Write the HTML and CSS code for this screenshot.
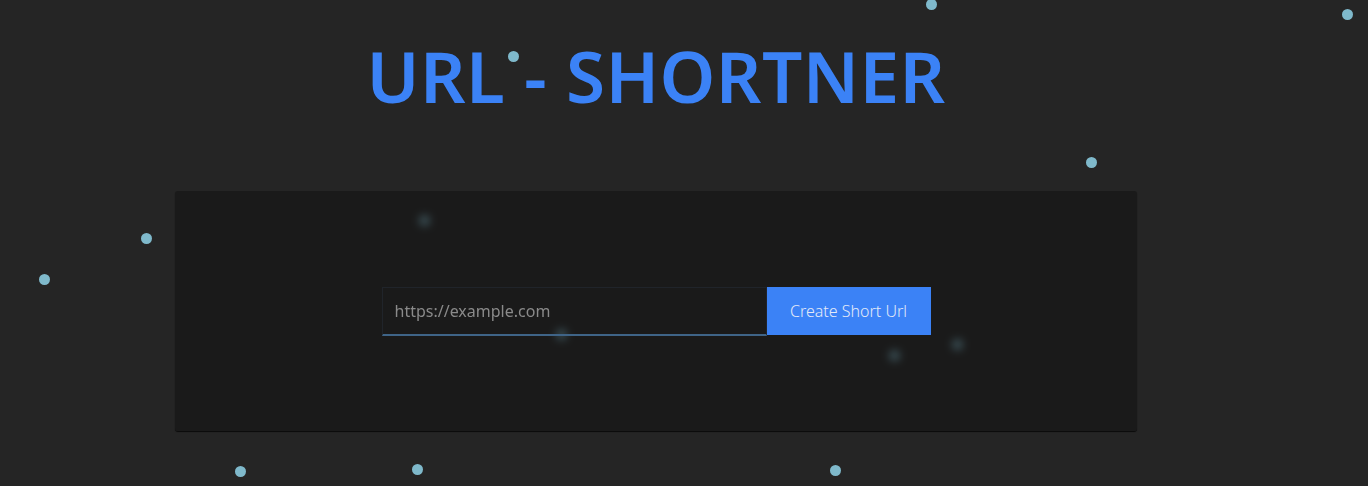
FILE: index.html
```html
<!DOCTYPE html>
<html lang="en">
<head>
<meta charset="utf-8">
<title>URL - SHORTNER</title>
<link rel="stylesheet" href="styles.css">
</head>
<body>
<div class="particles">
  <span class="dot" style="left:931px;top:4px"></span>
  <span class="dot" style="left:1347px;top:14px"></span>
  <span class="dot" style="left:513px;top:56px"></span>
  <span class="dot" style="left:1091px;top:162px"></span>
  <span class="dot" style="left:146px;top:238px"></span>
  <span class="dot" style="left:44px;top:279px"></span>
  <span class="dot" style="left:424px;top:220px"></span>
  <span class="dot" style="left:561px;top:334px"></span>
  <span class="dot" style="left:894px;top:355px"></span>
  <span class="dot" style="left:957px;top:344px"></span>
  <span class="dot" style="left:240px;top:471px"></span>
  <span class="dot" style="left:417px;top:469px"></span>
  <span class="dot" style="left:835px;top:470px"></span>
</div>
<main class="page">
  <h1 class="title">URL - SHORTNER</h1>
  <section class="card">
    <form class="shorten">
      <input class="url-input" type="text" placeholder="https://example.com">
      <button class="create-btn" type="button">Create Short Url</button>
    </form>
  </section>
</main>
</body>
</html>
```
FILE: styles.css
```css
html, body {
  margin: 0;
  padding: 0;
}
body {
  background: #252525;
  width: 1368px;
  height: 486px;
  overflow: hidden;
  font-family: "Noto Sans", "Open Sans", sans-serif;
  position: relative;
}
.particles {
  position: absolute;
  inset: 0;
  z-index: 0;
}
.dot {
  position: absolute;
  width: 11px;
  height: 11px;
  margin: -5.5px 0 0 -5.5px;
  border-radius: 50%;
  background: #7fb9cb;
}
.page {
  position: relative;
  z-index: 1;
  width: 1312px;
  display: flex;
  flex-direction: column;
  align-items: center;
}
.title {
  margin: 34px 0 0;
  font-size: 71px;
  line-height: 84px;
  font-weight: 600;
  color: #3b82f6;
  letter-spacing: 0.4px;
}
.card {
  margin-top: 73px;
  width: 962px;
  height: 240px;
  border-radius: 3px;
  background: rgba(21, 21, 21, 0.64);
  backdrop-filter: blur(4px);
  box-shadow: 0 1px 1px rgba(0,0,0,0.75);
  display: flex;
  align-items: center;
  justify-content: center;
}
.shorten {
  display: flex;
  margin: 0;
}
.url-input {
  box-sizing: border-box;
  width: 385px;
  height: 49px;
  margin: 0;
  padding: 0 12px;
  background: transparent;
  border: 1px solid #20242a;
  border-bottom: 2px solid #3f6487;
  color: #ccc;
  font-family: "Noto Sans", "Open Sans", sans-serif;
  font-size: 16px;
  outline: none;
}
.url-input::placeholder {
  color: #8a8a8a;
}
.create-btn {
  width: 164px;
  height: 48px;
  margin: 0;
  border: none;
  background: #3b82f6;
  color: #e3eaf8;
  font-family: "Noto Sans", "Open Sans", sans-serif;
  font-weight: 300;
  font-size: 16px;
  cursor: pointer;
}
```
